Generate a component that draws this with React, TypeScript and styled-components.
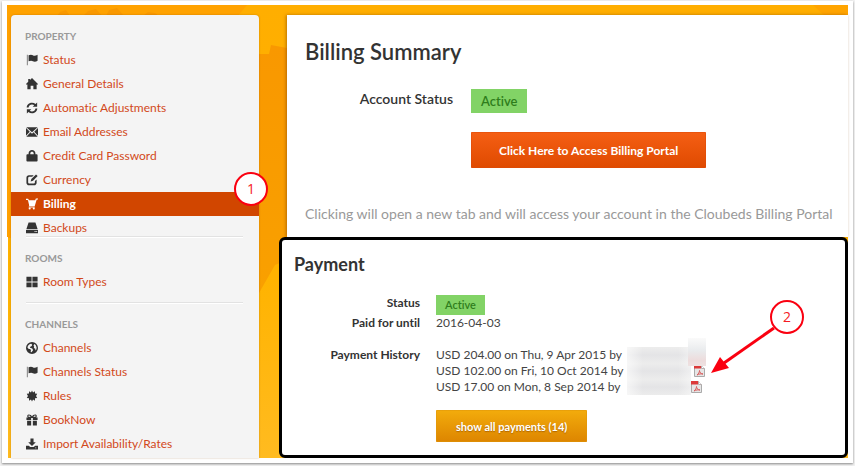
import React from "react";
import styled, { createGlobalStyle, css } from "styled-components";

const GlobalStyle = createGlobalStyle`
  *, *::before, *::after { box-sizing: border-box; }
  body {
    margin: 0;
    background: #f1f1f1;
    color: #333;
    font-family: Lato, "Open Sans", sans-serif;
    font-size: 12px;
    line-height: 16px;
    font-variant-ligatures: none;
  }
  h1, h2, h3, p, ul, dl, dd { margin: 0; padding: 0; }
  ul { list-style: none; }
`;

const Frame = styled.div`
  margin: 1px 2px 3px;
  padding: 4px 5px 5px;
  background: #fff;
  box-shadow: 0 1px 2px #8a8a8a;
`;

const Scene = styled.div`
  position: relative;
  isolation: isolate;
  display: flex;
  gap: 20px;
  padding: 10px 0 0 4px;
  background: #ffb000;
`;

const Artwork = styled.svg`
  position: absolute;
  inset: 0;
  z-index: -1;
  width: 100%;
  height: 100%;
`;

const Sidebar = styled.nav`
  flex: 0 0 248px;
  padding: 9px 0 2px;
  border-radius: 4px 4px 0 0;
  background: #f4f4f4;
  box-shadow: 0 0 2px rgba(120, 60, 0, 0.4);
`;

const Divider = styled.hr<{ $tight?: boolean }>`
  height: 2px;
  margin: ${(p) => (p.$tight ? "-4px" : "8px")} 16px 8px 15px;
  border: 0;
  border-top: 1px solid #e2e2e2;
  background: #fff;
`;

const SectionTitle = styled.h3`
  padding-left: 14px;
  color: #999;
  font-size: 10px;
  font-weight: 700;
  line-height: 24px;
  text-transform: uppercase;
`;

const Item = styled.li`
  position: relative;
`;

const ItemLink = styled.a<{ $active?: boolean }>`
  display: flex;
  align-items: center;
  gap: 5px;
  height: 24px;
  padding-left: 15px;
  color: #d2491a;
  text-decoration: none;
  svg {
    flex: none;
    width: 12px;
    height: 12px;
    color: #333;
  }
  ${(p) =>
    p.$active &&
    css`
      background: #d14600;
      color: #fff;
      font-weight: 700;
      svg { color: #fff; }
    `}
`;

const Main = styled.main`
  flex: 1;
  min-width: 0;
`;

const Summary = styled.section`
  margin-left: 8px;
  padding: 23px 0 13px 18px;
  background: #fff;
  box-shadow: -1px 0 3px rgba(120, 60, 0, 0.5);
`;

const PageTitle = styled.h1`
  margin-bottom: 23px;
  font-size: 22px;
  font-weight: 600;
  line-height: 28px;
`;

const SummaryGrid = styled.div`
  display: grid;
  grid-template-columns: 148px auto;
  justify-content: start;
  justify-items: start;
  column-gap: 18px;
  row-gap: 19px;
`;

const SummaryLabel = styled.div`
  justify-self: end;
  font-size: 14px;
  font-weight: 600;
  line-height: 20px;
`;

const Badge = styled.span<{ $small?: boolean }>`
  display: inline-block;
  padding: ${(p) => (p.$small ? "0 9px" : "0 10px")};
  background: #82d366;
  color: #2f7d1c;
  font-size: ${(p) => (p.$small ? "11px" : "13px")};
  font-weight: 600;
  line-height: ${(p) => (p.$small ? "20px" : "24px")};
`;

const Button = styled.button<{ $amber?: boolean }>`
  border: 0;
  border-radius: 1px;
  color: #fff;
  font-family: inherit;
  font-weight: 700;
  cursor: pointer;
  ${(p) =>
    p.$amber
      ? css`
          height: 32px;
          padding: 0 20px;
          background: linear-gradient(#f3ac0c, #dd8500);
          box-shadow: inset 0 0 0 1px rgba(224, 150, 10, 0.5);
          font-size: 11px;
          text-shadow: 0 1px 1px rgba(120, 60, 0, 0.5);
        `
      : css`
          grid-column: 2;
          height: 36px;
          padding: 0 28px;
          background: linear-gradient(#f55f14, #df4a00);
          box-shadow: inset 0 0 0 1px rgba(222, 74, 8, 0.5);
          font-size: 12px;
        `}
`;

const Note = styled.p`
  margin-top: 36px;
  color: #999;
  font-size: 14px;
  line-height: 20px;
`;

const PaymentPanel = styled.section`
  position: relative;
  padding: 12px 12px 13px;
  border: 3px solid #000;
  border-radius: 6px;
  background: #fff;
`;

const PanelTitle = styled.h2`
  margin-bottom: 19px;
  font-size: 18px;
  font-weight: 700;
  line-height: 24px;
`;

const Details = styled.dl`
  display: grid;
  grid-template-columns: 126px auto;
  justify-content: start;
  justify-items: start;
  column-gap: 16px;
`;

const Term = styled.dt`
  justify-self: end;
  font-weight: 700;
`;

const Value = styled.dd<{ $spaced?: boolean }>`
  display: flex;
  margin-bottom: ${(p) => (p.$spaced ? "16px" : "0")};
  color: #444;
`;

const History = styled.ul`
  width: 191px;
  white-space: nowrap;
`;

const Redaction = styled.div`
  width: 64px;
  background:
    linear-gradient(90deg, rgba(255, 255, 255, 0.6), transparent 25%, transparent 80%, rgba(255, 255, 255, 0.4)),
    repeating-linear-gradient(#ececec 0 1px, #e4e4e6 8px, #ececec 16px);
`;

const Receipts = styled.ul`
  position: relative;
  width: 20px;
`;

const Receipt = styled.li<{ $inset?: boolean }>`
  display: flex;
  align-items: center;
  height: 16px;
  padding-left: ${(p) => (p.$inset ? "3px" : "0")};
  a, svg { display: block; }
`;

const Smudge = styled.span`
  position: absolute;
  top: -9px;
  left: -3px;
  width: 18px;
  height: 28px;
  background: linear-gradient(#fafafa, #e9ebed 45%, #eddcdc 80%, #eee2e2);
`;

const PanelFooter = styled.div`
  margin: -1px 0 0 142px;
`;

const Callout = styled.span`
  position: absolute;
  z-index: 2;
  display: grid;
  place-items: center;
  width: 34px;
  height: 34px;
  border: 2px solid #fa0010;
  border-radius: 50%;
  background: #fff;
  color: #f51b24;
  font: 400 14px/16px "Open Sans", sans-serif;
`;

const MenuCallout = styled(Callout)`
  top: -20px;
  right: -9px;
`;

const ReceiptCallout = styled(Callout)`
  top: 60px;
  left: 488px;
`;

const Arrow = styled.svg`
  position: absolute;
  top: 84px;
  left: 428px;
  width: 66px;
  height: 50px;
`;

const icons: Record<string, React.ReactNode> = {
  flag: (
    <>
      <path d="M1 1h1v12H1z" opacity=".7" />
      <path d="M3 1.500c2-1 4-.8 5 0s3 1 5.500-.5V8c-2 1.300-4.500 1.200-5.500.4S5 7.500 3 8.500z" />
    </>
  ),
  home: <path d="M7 0l7.500 7.500H12.400V13H8.600V9H5.400v4H1.600V7.500H-.5L2.600 4.400V1.200h2v1.200z" />,
  refresh: (
    <path d="M.8 6.300C1 3 3.800.8 7 .8c1.600 0 3 .5 4.100 1.500L13 .6v5H7.800l1.800-1.800C8.900 3.200 8 2.900 7 2.900c-2 0-3.700 1.300-4 3.400zM13.200 7.700C13 11 10.200 13.200 7 13.200c-1.600 0-3-.5-4.100-1.500L1 13.400v-5h5.200l-1.800 1.800c.7.6 1.600.9 2.600.9 2 0 3.700-1.300 4-3.400z" />
  ),
  mail: <path d="M.4 1.500h13.200L7 7.200zM0 2.400l4.400 4.200L0 11.400zM14 2.400v9l-4.400-4.800zM5.200 7.300L7 8.900l1.800-1.600 4.800 5.200H.4z" />,
  lock: (
    <path d="M3 5V4c0-2.300 1.800-4 4-4s4 1.700 4 4v1h1.500c.6 0 1 .4 1 1v6.500c0 .6-.4 1-1 1h-11c-.6 0-1-.4-1-1V6c0-.6.4-1 1-1zm2 0h4V4c0-1.200-.9-2-2-2s-2 .8-2 2z" />
  ),
  edit: (
    <>
      <path d="M9 1.500L7.200 3.300H4C3.200 3.300 2.500 4 2.500 4.800v4.900c0 .8.700 1.500 1.500 1.500h4.900c.8 0 1.500-.7 1.500-1.500V8.300l2-2v3.900c0 1.800-1.200 3-3 3H3.500c-1.800 0-3-1.200-3-3V4.500c0-1.800 1.200-3 3-3z" />
      <path d="M11.700.5l1.900 1.900-5.400 5.500-2.800.8.800-2.800z" />
    </>
  ),
  cart: (
    <>
      <path d="M0 1h2.500l.9 1.500h7.300L11.500.5H14v1.300h-1.500l-2.300 7.400H3.600v-1L2.400 3 1.800 2.200H0zM3.200 9.800h7v1.200h-7z" />
      <circle cx="4.300" cy="12.200" r="1.200" />
      <circle cx="9.100" cy="12.200" r="1.200" />
    </>
  ),
  drive: <path d="M3 .5h8l2.600 8H.4zM0 9.300h14V13H0zm10 1.200v1.200h1.200v-1.200zm2 0v1.200h1v-1.200z" fillRule="evenodd" />,
  grid: <path d="M.5 1h6v5.500h-6zM7.500 1h6v5.500h-6zM.5 7.500h6V13h-6zM7.500 7.500h6V13h-6z" />,
  globe: (
    <path
      fillRule="evenodd"
      d="M7 0a7 7 0 1 1 0 14A7 7 0 0 1 7 0zM4.500 2.200L2.300 4.300 1.700 6.500l1.500 1.600 1.700.2.900 1.200-.4 2.300L6.500 12l1.700-2.500-.6-1.700-1.700-.9-1.200.1L5 5.500l1.700-.9.500-1.500-1-1.100zM10 2.200L8.800 3.800 9.500 5.400l-.4 1.500L10.800 8l.3 2 1-1.300.3-2.400-1-2.600z"
    />
  ),
  burst: (
    <path d="M7 .6l1.200 2.300 2.300-1.300v2.600l2.600.3L11.700 7l1.400 2.300-2.600.4v2.700l-2.300-1.200L7 13.400l-1.200-2.200-2.300 1.200V9.700L.9 9.300 2.300 7 .9 4.500l2.600-.3V1.600l2.300 1.300z" />
  ),
  gift: (
    <path
      fillRule="evenodd"
      d="M.5 4h1.700C.6 2.500 1.600.5 3.400.5 5 .5 6.500 1.600 7 3 7.500 1.600 9 .5 10.600.5c1.800 0 2.800 2 1.200 3.500h1.700v3H8V4.600H6V7H.5zM3.300 1.700c-1 .2-.8 1.300.2 1.500l1.900.2c-.3-1-1.200-1.800-2.100-1.700zm7.400 0c-.9-.1-1.800.7-2.100 1.700l1.900-.2c1-.2 1.200-1.300.2-1.500zM1.300 8H6v5.500H1.300zM8 8h4.700v5.500H8z"
    />
  ),
  import: (
    <path fillRule="evenodd" d="M5.200.5h3.600V5h2.600L7 9.200 2.600 5h2.600zM0 9h3.200l1.800 1.500h4L10.800 9H14v4.500H0zm10.800 2V12H12v-1z" />
  ),
};

const Icon = ({ name }: { name: string }) => (
  <svg viewBox="0 0 14 14" fill="currentColor" aria-hidden="true">
    {icons[name]}
  </svg>
);

const PdfIcon = () => (
  <svg width="11" height="12" viewBox="0 0 11 12" aria-hidden="true">
    <path d="M.5.500h7l3 3v8H.500z" fill="#e6e6e6" stroke="#aaa" />
    <path d="M0 0h7v3.500H0z" fill="#dc3a3a" />
    <path d="M7.500.500v3h3" fill="#fff" stroke="#b8acac" />
    <path d="M3 10c1.500-1 2.500-3 2.500-4.500C5.500 7.500 7 9 9 9 7 8.500 5 9 3 10z" fill="none" stroke="#d85c5c" />
  </svg>
);

const menu = [
  {
    title: "Property",
    items: [
      ["flag", "Status"],
      ["home", "General Details"],
      ["refresh", "Automatic Adjustments"],
      ["mail", "Email Addresses"],
      ["lock", "Credit Card Password"],
      ["edit", "Currency"],
      ["cart", "Billing"],
      ["drive", "Backups"],
    ],
  },
  { title: "Rooms", tight: true, items: [["grid", "Room Types"]] },
  {
    title: "Channels",
    items: [
      ["globe", "Channels"],
      ["flag", "Channels Status"],
      ["burst", "Rules"],
      ["gift", "BookNow"],
      ["import", "Import Availability/Rates"],
    ],
  },
];

const payments = [
  "USD 204.00 on Thu, 9 Apr 2015 by",
  "USD 102.00 on Fri, 10 Oct 2014 by",
  "USD 17.00 on Mon, 8 Sep 2014 by",
];

const Backdrop = () => (
  <Artwork viewBox="0 0 841 453" preserveAspectRatio="none" aria-hidden="true">
    <defs>
      <linearGradient id="sun" x1="0" y1="0" x2="0" y2="1">
        <stop offset="0" stopColor="#ffae00" />
        <stop offset=".6" stopColor="#ffb300" />
        <stop offset="1" stopColor="#ffbb20" />
      </linearGradient>
      <linearGradient id="shade" x1="0" y1="0" x2="0" y2="1">
        <stop offset="0" stopColor="#f99800" />
        <stop offset="1" stopColor="#f9a000" />
      </linearGradient>
    </defs>
    <path d="M0 0h841v453H0z" fill="url(#sun)" />
    <path d="M0 0h240l-10 12H0z" fill="#ffa200" />
    <path d="M0 12h5v221H0z" fill="#ffa000" />
    <path d="M0 232h1v221H0z" fill="#fff" />
    <path d="M50 11l3-4 6-2 4 6zM76 11l5-5 8-2 6 7zM99 11l3-6 8-2 7 8zM136 11l5-4 7 1 4 3z" fill="#f99800" />
    <path d="M245 49h17l2-9 16 3v212l-12 5-16 28h-7z" fill="url(#shade)" />
    <path d="M806 0h35v12h-22z" fill="#ffa400" />
  </Artwork>
);

export default function App() {
  return (
    <>
      <GlobalStyle />
      <Frame>
        <Scene>
          <Backdrop />
          <Sidebar aria-label="Settings">
            {menu.map((section, index) => (
              <React.Fragment key={section.title}>
                {index > 0 && <Divider $tight={section.tight} />}
                <SectionTitle>{section.title}</SectionTitle>
                <ul>
                  {section.items.map(([icon, label]) => (
                    <Item key={label}>
                      <ItemLink href="#" $active={label === "Billing"}>
                        <Icon name={icon} />
                        {label}
                      </ItemLink>
                      {label === "Billing" && <MenuCallout>1</MenuCallout>}
                    </Item>
                  ))}
                </ul>
              </React.Fragment>
            ))}
          </Sidebar>
          <Main>
            <Summary>
              <PageTitle>Billing Summary</PageTitle>
              <SummaryGrid>
                <SummaryLabel>Account Status</SummaryLabel>
                <Badge>Active</Badge>
                <Button type="button">Click Here to Access Billing Portal</Button>
              </SummaryGrid>
              <Note>Clicking will open a new tab and will access your account in the Cloubeds Billing Portal</Note>
            </Summary>
            <PaymentPanel>
              <PanelTitle>Payment</PanelTitle>
              <Details>
                <Term>Status</Term>
                <Value>
                  <Badge $small>Active</Badge>
                </Value>
                <Term>Paid for until</Term>
                <Value $spaced>2016-04-03</Value>
                <Term>Payment History</Term>
                <Value $spaced>
                  <History>
                    {payments.map((payment) => (
                      <li key={payment}>{payment}</li>
                    ))}
                  </History>
                  <Redaction />
                  <Receipts>
                    <Receipt>
                      <Smudge />
                    </Receipt>
                    <Receipt $inset>
                      <a href="#" aria-label="Receipt, 10 Oct 2014">
                        <PdfIcon />
                      </a>
                    </Receipt>
                    <Receipt>
                      <a href="#" aria-label="Receipt, 8 Sep 2014">
                        <PdfIcon />
                      </a>
                    </Receipt>
                  </Receipts>
                </Value>
              </Details>
              <PanelFooter>
                <Button type="button" $amber>
                  show all payments (14)
                </Button>
              </PanelFooter>
              <Arrow viewBox="0 0 66 50" aria-hidden="true">
                <path d="M64 4L14 39" stroke="#fa0010" strokeWidth="3" />
                <path d="M1 49l9-16 9 11z" fill="#fa0010" />
              </Arrow>
              <ReceiptCallout>2</ReceiptCallout>
            </PaymentPanel>
          </Main>
        </Scene>
      </Frame>
    </>
  );
}
